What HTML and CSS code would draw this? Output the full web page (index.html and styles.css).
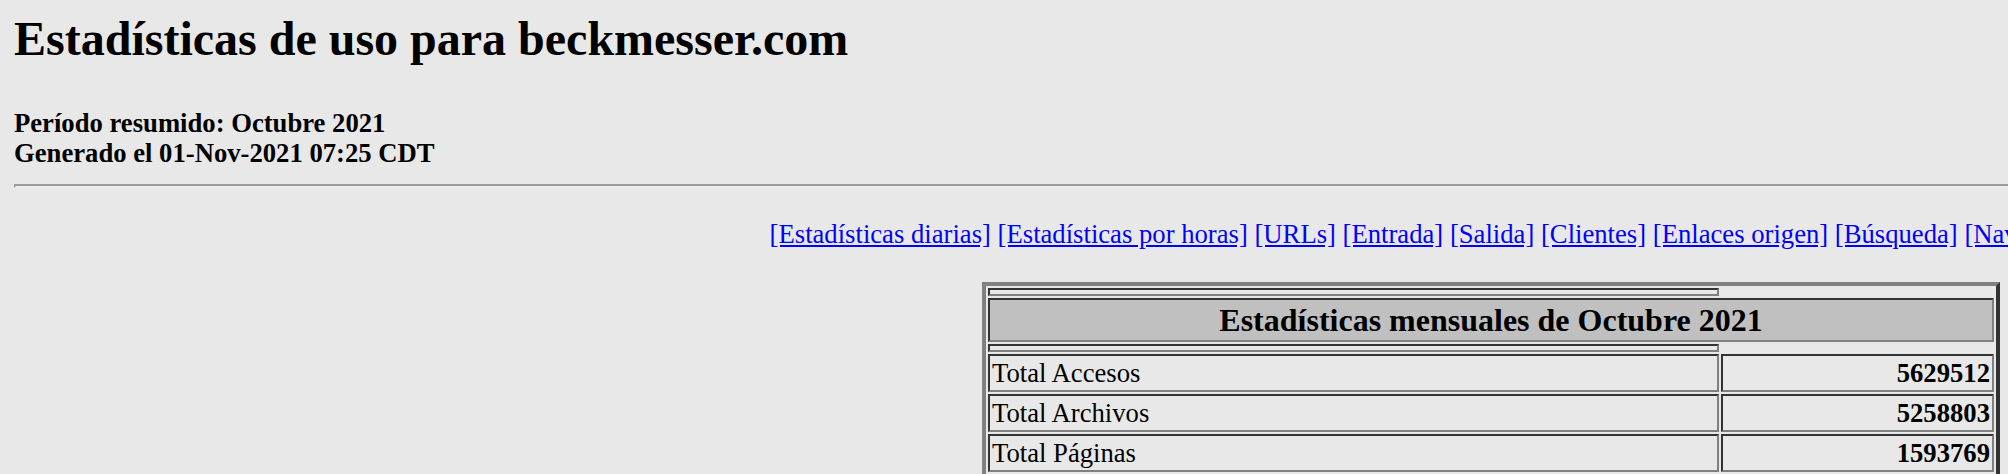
FILE: index.html
```
<!DOCTYPE html>
<html lang="es">
<head>
<meta charset="utf-8">
<title>Estadísticas de uso para beckmesser.com</title>
<link rel="stylesheet" href="styles.css">
</head>
<body>
<div class="page">
  <h2 class="title">Estadísticas de uso para beckmesser.com</h2>
  <div class="period">
    <strong>Período resumido: Octubre 2021<br>Generado el 01-Nov-2021 07:25 CDT</strong>
  </div>
  <hr class="rule">
  <div class="center">
    <nav class="links">
      <a href="#DAYSTATS">[Estadísticas diarias]</a>
      <a href="#HOURSTATS">[Estadísticas por horas]</a>
      <a href="#TOPURLS">[URLs]</a>
      <a href="#TOPENTRY">[Entrada]</a>
      <a href="#TOPEXIT">[Salida]</a>
      <a href="#TOPSITES">[Clientes]</a>
      <a href="#TOPREFS">[Enlaces origen]</a>
      <a href="#TOPSEARCH">[Búsqueda]</a>
      <a href="#TOPAGENTS">[Navegadores]</a>
      <a href="#TOPCTRYS">[Países]</a>
    </nav>
    <table class="stats">
      <tr><th class="spacer"></th></tr>
      <tr><th class="head" colspan="2">Estadísticas mensuales de Octubre 2021</th></tr>
      <tr><th class="spacer"></th></tr>
      <tr><td class="label">Total Accesos</td><td class="value">5629512</td></tr>
      <tr><td class="label">Total Archivos</td><td class="value">5258803</td></tr>
      <tr><td class="label">Total Páginas</td><td class="value">1593769</td></tr>
    </table>
  </div>
</div>
</body>
</html>
```

FILE: styles.css
```
html, body {
  margin: 0;
  padding: 0;
  overflow: hidden;
  background: #e8e8e8;
}

body {
  font-family: "Liberation Serif", "Times New Roman", serif;
  color: #000;
}

.page {
  width: 2954px;
  margin-left: 14px;
  padding-top: 11px;
}

.title {
  margin: 0 0 42px 0;
  font-size: 48px;
  line-height: 55px;
  font-weight: bold;
}

.period {
  font-size: 26.667px;
  line-height: 30px;
}

.rule {
  margin: 16px 0 28px 0;
  height: 0;
  border-style: solid;
  border-width: 2px;
  border-color: #9a9a9a #eeeeee #eeeeee #9a9a9a;
}

.center {
  text-align: center;
}

.links {
  font-size: 26.667px;
  line-height: 36px;
  margin-bottom: 30px;
}

.links a {
  color: #0000ff;
}

.stats {
  width: 1018px;
  margin: 0 auto;
  border-collapse: separate;
  border-spacing: 2px;
  border-style: solid;
  border-width: 4px;
  border-color: #808080 #333333 #333333 #808080;
}

.stats th,
.stats td {
  padding: 2px;
  border-style: solid;
  border-width: 2px;
  border-color: #333333 #808080 #808080 #333333;
}

.stats .spacer {
  padding: 2px;
}

.stats .head {
  background: #c0c0c0;
  font-size: 32px;
  line-height: 36px;
  font-weight: bold;
  text-align: center;
}

.stats .label {
  box-sizing: border-box;
  width: 731px;
  font-size: 26.667px;
  line-height: 30px;
  text-align: left;
}

.stats .value {
  font-size: 26.667px;
  line-height: 30px;
  font-weight: bold;
  text-align: right;
}
```
